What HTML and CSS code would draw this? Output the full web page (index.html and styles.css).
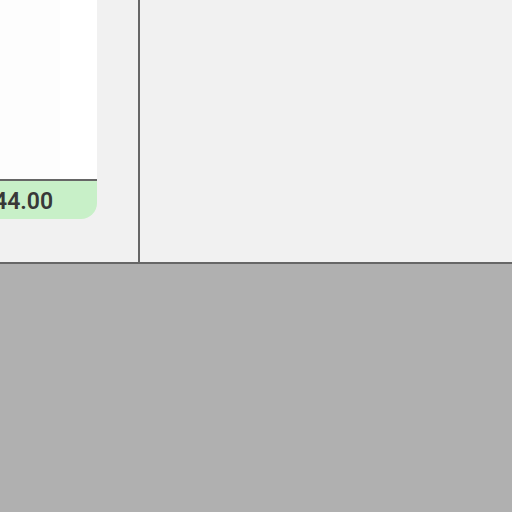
FILE: index.html
```html
<!DOCTYPE html>
<html>
<head>
<meta charset="utf-8">
<link rel="stylesheet" href="styles.css">
</head>
<body>
<div class="top">
  <div class="left">
    <div class="card">
      <div class="card-body">
        <div class="col-a"></div>
        <div class="col-b"></div>
      </div>
      <div class="card-foot"><span class="total">44.00</span></div>
    </div>
  </div>
  <div class="right"></div>
</div>
<div class="bottom"></div>
</body>
</html>
```

FILE: styles.css
```css
html, body {
  margin: 0;
  padding: 0;
  width: 512px;
  height: 512px;
  overflow: hidden;
  background: #b0b0b0;
  font-family: Roboto, "Liberation Sans", sans-serif;
}
.top {
  display: flex;
  height: 262px;
  border-bottom: 2px solid #666666;
  background: #f1f1f1;
}
.left {
  width: 138px;
  border-right: 2px solid #666666;
  flex: none;
}
.right {
  flex: 1;
}
.card {
  margin-left: -40px;
  width: 137px;
}
.card-body {
  display: flex;
  height: 179px;
}
.col-a {
  width: 100px;
  background: #fdfdfd;
}
.col-b {
  flex: 1;
  background: #ffffff;
}
.card-foot {
  border-top: 2px solid #666666;
  height: 38px;
  background: #c8f0c8;
  border-bottom-right-radius: 16px;
  padding-left: 34px;
  line-height: 42px;
  white-space: nowrap;
  overflow: hidden;
}
.total {
  font-size: 23px;
  font-weight: 600;
  color: #383838;
}
```
